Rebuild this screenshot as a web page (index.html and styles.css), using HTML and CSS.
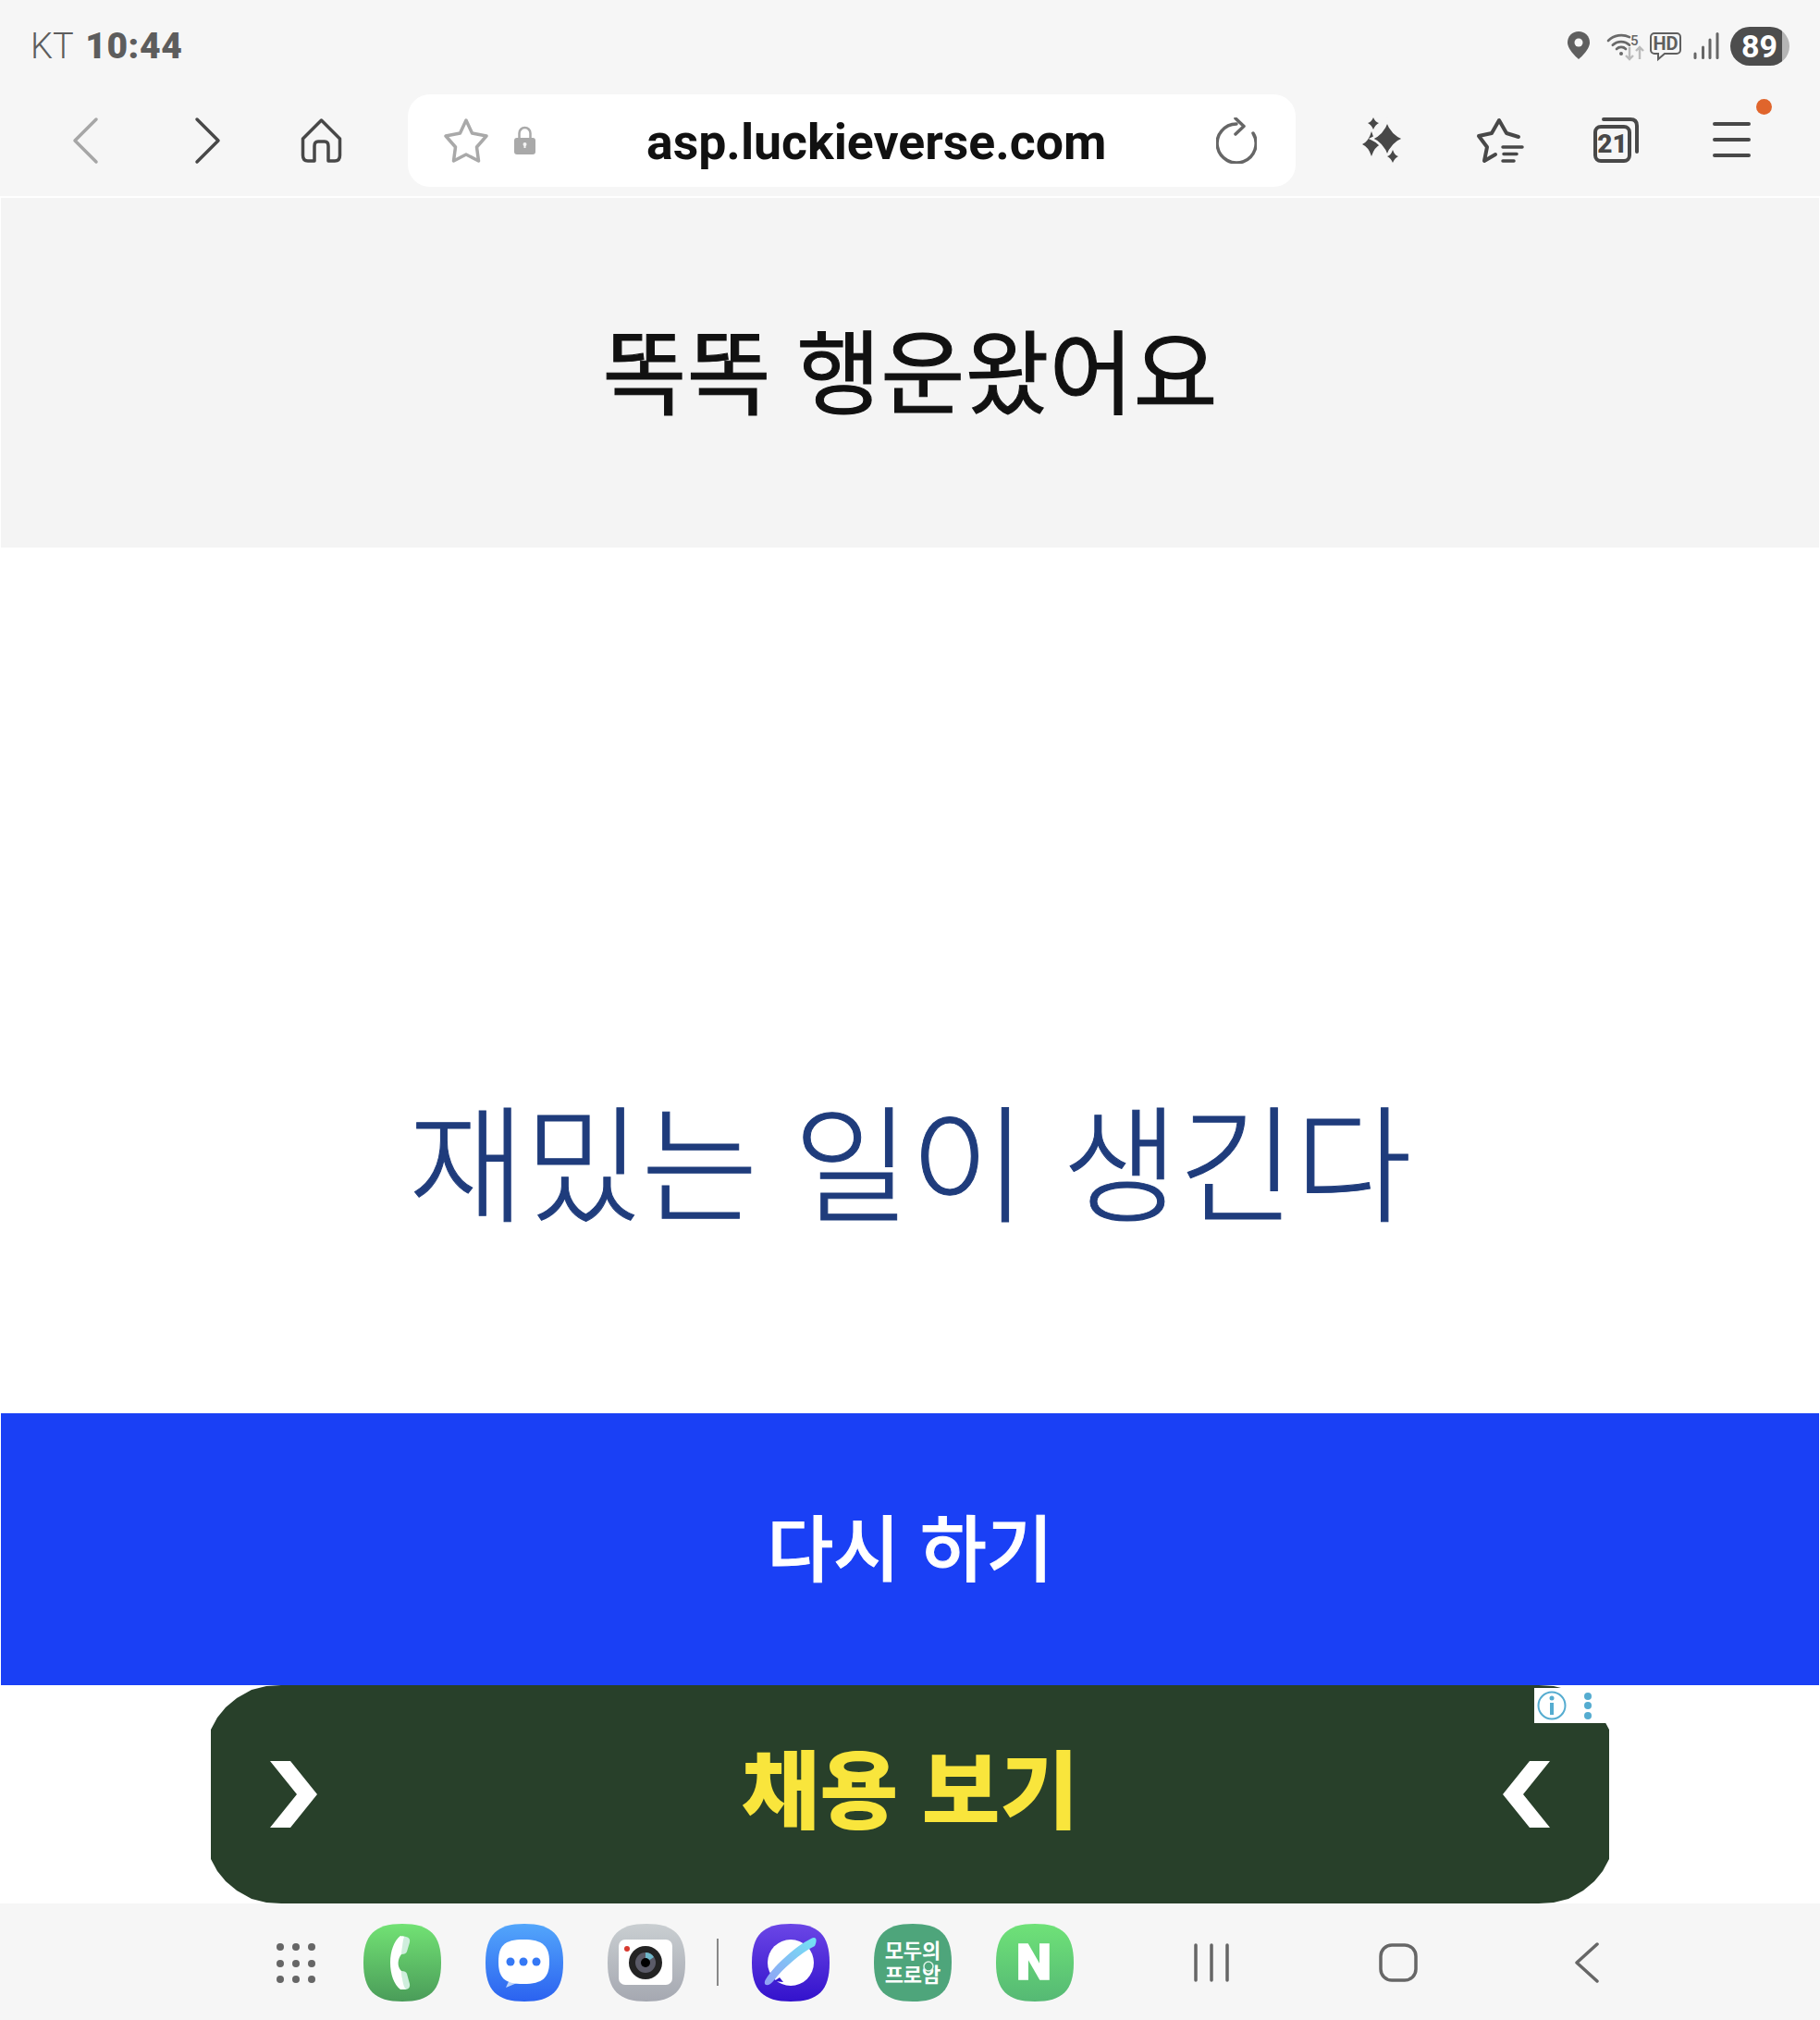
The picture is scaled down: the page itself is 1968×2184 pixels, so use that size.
FILE: index.html
```html
<!DOCTYPE html>
<html lang="ko">
<head>
    <meta charset="UTF-8">
    <meta name="viewport" content="width=device-width, initial-scale=1.0">
    <title>똑똑 행운왔어요</title>
    <link rel="stylesheet" href="styles.css">
</head>
<body>
<!-- Status bar -->
<div class="status-bar">
    <div class="status-left">KT <strong>10:44</strong></div>
    <div class="status-right">
        <svg class="st-pin" width="24" height="30" viewBox="0 0 24 30"><path d="M12 0C5 0 0 5 0 12C0 20 12 30 12 30C12 30 24 20 24 12C24 5 19 0 12 0Z" fill="#5f5f5f"/><circle cx="12" cy="12" r="4.5" fill="#f6f6f6"/></svg>
        <svg class="st-wifi" width="40" height="28" viewBox="0 0 40 28">
            <g fill="none" stroke="#6a6a6a" stroke-width="2.6" stroke-linecap="round">
                <path d="M2 7A20 20 0 0 1 25 3.2"/>
                <path d="M6.8 11.8A13 13 0 0 1 25 11.8"/>
                <path d="M11 16A7 7 0 0 1 21 16"/>
            </g>
            <circle cx="16" cy="21" r="2" fill="#6a6a6a"/>
            <text class="wifi-five" x="26" y="12">5</text>
            <g fill="none" stroke="#bbb" stroke-width="2.4">
                <path d="M25 14V27M21 23L25 27L29 23"/>
                <path d="M36 27V14M32 18L36 14L40 18"/>
            </g>
        </svg>
        <svg class="st-hd" width="34" height="30" viewBox="0 0 34 30">
            <path d="M5 1H29A4 4 0 0 1 33 5V19A4 4 0 0 1 29 23H16L9 29V23H5A4 4 0 0 1 1 19V5A4 4 0 0 1 5 1Z" fill="none" stroke="#5f5f5f" stroke-width="2"/>
            <text class="hd-label" x="17" y="19">HD</text>
        </svg>
        <svg class="st-signal" width="28" height="29" viewBox="0 0 28 29">
            <g stroke="#666" stroke-width="3" stroke-linecap="round">
                <path d="M2 27.500V23"/>
                <path d="M10.500 27.500V16"/>
                <path d="M18 27.500V8"/>
                <path d="M26 27.500V1.500"/>
            </g>
        </svg>
        <span class="battery">89</span>
    </div>
</div>

<!-- Browser toolbar -->
<div class="toolbar">
    <svg class="cell" viewBox="0 0 126 100"><path class="ic-light" d="M75 27L52 50L75 73"/></svg>
    <svg class="cell" viewBox="0 0 126 100"><path class="ic-dark" d="M58 27L81 50L58 73"/></svg>
    <svg class="cell" viewBox="0 0 126 100"><path class="ic-dark" d="M66.500 28L46.500 48V66Q46.500 72 52 72H59V56Q59 51 63 51H70Q74 51 74 56V72H81Q86.500 72 86.500 66V48Z"/></svg>
    <div class="url-box">
        <svg class="url-star" width="50" height="50" viewBox="0 0 50 50"><path d="M25 3L31.500 17L47 20L36.500 32L38.500 47L25 40L11.500 47L13.500 32L3 20L18.500 17Z" fill="none" stroke="#a9a9a9" stroke-width="3.500" stroke-linejoin="round"/></svg>
        <svg class="url-lock" width="23" height="31" viewBox="0 0 23 31"><path d="M5.500 14V8A6 6 0 0 1 17.500 8V14" fill="none" stroke="#a9a9a9" stroke-width="2.500"/><rect y="13" width="23" height="18" rx="3" fill="#a9a9a9"/><path d="M10.500 24H12.500V20H10.500Z" fill="#f4f4f4"/><circle cx="11.500" cy="20" r="2" fill="#f4f4f4"/></svg>
        <span class="url-text">asp.luckieverse.com</span>
        <svg class="url-reload" width="44" height="50" viewBox="0 0 44 50"><path d="M40 17A21 21 0 1 1 22 7M21 1L30 9.500L21 18" fill="none" stroke="#666" stroke-width="3.500" stroke-linecap="round" stroke-linejoin="round"/></svg>
    </div>
    <svg class="cell" viewBox="0 0 126 100">
        <g fill="#484848">
            <path d="M51 40Q54 51 61 54Q54 57 51 67Q48 57 41 54Q48 51 51 40Z"/>
            <path d="M68 29Q73 43 86 48Q73 53 68 67Q63 53 51 48Q63 43 68 29Z" stroke="#f6f6f6" stroke-width="2.500"/>
            <path d="M53 25Q55 30 59 31Q55 33 53 38Q51 33 47 31Q51 30 53 25Z"/>
            <path d="M74 60Q76 66 80 67Q76 69 74 74Q72 69 68 67Q72 66 74 60Z"/>
        </g>
    </svg>
    <svg class="cell" viewBox="0 0 126 100">
        <path class="ic-dark ic-thick" d="M84 46L71 42L63 28L55 42L41 45L50 57L47 72L59 65"/>
        <path class="ic-dark" d="M67 57H88M68 64.500H82M67 72H79"/>
    </svg>
    <svg class="cell" viewBox="0 0 126 100">
        <rect class="ic-dark ic-thick" x="41" y="35" width="37" height="37" rx="6"/>
        <path class="ic-dark ic-thick" d="M50 27H79Q86 27 86 34V62"/>
        <text class="tab-count" x="59.500" y="63">21</text>
    </svg>
    <div class="menu-cell">
        <svg class="cell" viewBox="0 0 126 100"><path class="ic-dark ic-thick" d="M44 32H81M44 49H81M44 66H81"/></svg>
        <span class="menu-dot"></span>
    </div>
</div>

<!-- Page -->
<header class="page-title">
    <h1>똑똑 행운왔어요</h1>
</header>
<main class="result">
    <p>재밌는 일이 생긴다</p>
</main>
<button class="retry">다시 하기</button>

<!-- Ad -->
<div class="ad-slot">
    <div class="ad">
        <svg width="51" height="72" viewBox="0 0 51 72"><polygon points="0,0 22,0 51,36 22,72 0,72 29,36" fill="#fff"/></svg>
        <span class="ad-text">채용 보기</span>
        <svg width="51" height="72" viewBox="0 0 51 72"><polygon points="51,0 29,0 0,36 29,72 51,72 22,36" fill="#fff"/></svg>
    </div>
    <div class="ad-info">
        <svg width="78" height="38" viewBox="0 0 78 38">
            <circle cx="19" cy="19" r="14.500" fill="none" stroke="#55acd0" stroke-width="2"/>
            <circle cx="19" cy="11" r="2.500" fill="#55acd0"/>
            <rect x="17" y="16" width="4" height="13" fill="#55acd0"/>
            <circle cx="58" cy="9" r="4" fill="#55acd0"/>
            <circle cx="58" cy="19" r="4" fill="#55acd0"/>
            <circle cx="58" cy="30" r="4" fill="#55acd0"/>
        </svg>
    </div>
</div>

<!-- Dock -->
<footer class="dock">
    <svg class="dock-grid" width="44" height="44" viewBox="0 0 44 44">
        <g fill="#666">
            <circle cx="4" cy="4" r="4"/><circle cx="21" cy="4" r="4"/><circle cx="38" cy="4" r="4"/>
            <circle cx="4" cy="22" r="4"/><circle cx="21" cy="22" r="4"/><circle cx="38" cy="22" r="4"/>
            <circle cx="4" cy="39" r="4"/><circle cx="21" cy="39" r="4"/><circle cx="38" cy="39" r="4"/>
        </g>
    </svg>
    <svg class="app" width="84" height="84" viewBox="0 0 84 84">
        <defs>
            <linearGradient id="g-phone" x1="0" y1="0" x2="0" y2="1"><stop offset="0" stop-color="#72e274"/><stop offset="1" stop-color="#4a9c59"/></linearGradient>
            <linearGradient id="g-msg" x1="0" y1="0" x2="0" y2="1"><stop offset="0" stop-color="#53a6fb"/><stop offset="1" stop-color="#2b62f0"/></linearGradient>
            <linearGradient id="g-cam" x1="0" y1="0" x2="0" y2="1"><stop offset="0" stop-color="#c9ced1"/><stop offset="1" stop-color="#a5a8b1"/></linearGradient>
            <linearGradient id="g-web" x1="0" y1="0" x2="0" y2="1"><stop offset="0" stop-color="#6b46e6"/><stop offset="1" stop-color="#3312cc"/></linearGradient>
            <linearGradient id="g-ring" x1="1" y1="0" x2="0" y2="1"><stop offset="0" stop-color="#72e4f4"/><stop offset="1" stop-color="#92a0f5"/></linearGradient>
            <linearGradient id="g-n" x1="0" y1="0" x2="0" y2="1"><stop offset="0" stop-color="#6fe278"/><stop offset="1" stop-color="#55b974"/></linearGradient>
        </defs>
        <path d="M42 0C72 0 84 12 84 42C84 72 72 84 42 84C12 84 0 72 0 42C0 12 12 0 42 0Z" fill="url(#g-phone)"/>
        <path d="M42 13L46 14Q51 15 50 20L47 30Q46 33 41 33ZM41 51Q46 51 47 54L50 65Q51 70 46 71L42 71Z" fill="#cfeedd"/>
        <path d="M40 13L44 14C42 20 42 28 41 33C37 38 36 46 41 51C42 58 42 66 46 71L40 71C33 66 29 54 29 42C29 30 33 18 40 13Z" fill="#fff"/>
    </svg>
    <svg class="app" width="84" height="84" viewBox="0 0 84 84">
        <path d="M42 0C72 0 84 12 84 42C84 72 72 84 42 84C12 84 0 72 0 42C0 12 12 0 42 0Z" fill="url(#g-msg)"/>
        <path d="M26 60L22 69L34 64Z" fill="#bcd4fb"/>
        <path d="M41 17C62 17 69 24 69 41C69 58 62 65 41 65C20 65 14 58 14 41C14 24 20 17 41 17Z" fill="#fff"/>
        <g fill="#3578f5"><circle cx="27" cy="41" r="4.500"/><circle cx="41" cy="41" r="4.500"/><circle cx="55" cy="41" r="4.500"/></g>
    </svg>
    <svg class="app app-last" width="84" height="84" viewBox="0 0 84 84">
        <path d="M42 0C72 0 84 12 84 42C84 72 72 84 42 84C12 84 0 72 0 42C0 12 12 0 42 0Z" fill="url(#g-cam)"/>
        <rect x="12" y="17" width="58" height="49" rx="7" fill="#fff"/>
        <circle cx="21" cy="27" r="3" fill="#d8392f"/>
        <circle cx="41" cy="42" r="18" fill="#232323"/>
        <circle cx="41" cy="42" r="11" fill="#5b5b68"/>
        <path d="M41 31A11 11 0 0 1 50 36L41 42Z" fill="#6fb7c9"/>
        <circle cx="41" cy="42" r="5" fill="#000"/>
    </svg>
    <span class="dock-divider"></span>
    <svg class="app" width="84" height="84" viewBox="0 0 84 84">
        <path d="M42 0C72 0 84 12 84 42C84 72 72 84 42 84C12 84 0 72 0 42C0 12 12 0 42 0Z" fill="url(#g-web)"/>
        <circle cx="42" cy="42" r="25" fill="#fff"/>
        <path d="M24 62L30 58L34 63Z" fill="#3312cc"/>
        <path d="M15 60C26 43 48 24 64 16C70 13 71 18 68 24C52 32 34 48 24 61C18 69 11 67 15 60Z" fill="url(#g-ring)"/>
    </svg>
    <svg class="app" width="84" height="84" viewBox="0 0 84 84">
        <path d="M42 0C72 0 84 12 84 42C84 72 72 84 42 84C12 84 0 72 0 42C0 12 12 0 42 0Z" fill="#4ea57b"/>
        <text class="app-label" x="42" y="37">모두의</text>
        <text class="app-label" x="42" y="63">프로암</text>
        <circle cx="59" cy="46" r="5" fill="#4ea57b" stroke="#dff3e8" stroke-width="1.500"/>
    </svg>
    <svg class="app" width="84" height="84" viewBox="0 0 84 84">
        <path d="M42 0C72 0 84 12 84 42C84 72 72 84 42 84C12 84 0 72 0 42C0 12 12 0 42 0Z" fill="url(#g-n)"/>
        <text class="app-n" x="41" y="60">N</text>
    </svg>
    <svg class="nav nav-recent" width="40" height="44" viewBox="0 0 40 44"><path class="nav-line" d="M3 3V41M20 3V41M37 3V41"/></svg>
    <svg class="nav nav-home" width="42" height="44" viewBox="0 0 42 44"><rect class="nav-line" x="2" y="3" width="38" height="38" rx="12"/></svg>
    <svg class="nav nav-back" width="26" height="44" viewBox="0 0 26 44"><path class="nav-line" d="M24 2L2 22L24 42"/></svg>
</footer>
</body>
</html>
```

FILE: styles.css
```css
* {
    box-sizing: border-box;
}
body {
    margin: 0;
    width: 1968px;
    height: 2184px;
    overflow: hidden;
    background: #fff;
    font-family: "Noto Sans CJK KR", "Noto Sans", sans-serif;
}
.status-bar {
    height: 102px;
    background: #f6f6f6;
    display: flex;
    justify-content: space-between;
    padding: 29px 33px 0 33px;
}
.status-left {
    font-family: "Roboto", sans-serif;
    font-size: 38px;
    font-weight: 300;
    line-height: 42px;
    color: #5d5d5d;
}
.status-left strong {
    font-size: 39px;
    font-weight: 900;
    margin-left: 4px;
    letter-spacing: 0.6px;
}
.status-right {
    display: flex;
    align-items: flex-start;
}
.st-pin {
    margin-top: 5px;
}
.st-wifi {
    margin: 8px 0 0 18px;
    overflow: visible;
}
.wifi-five {
    font-family: "Roboto", sans-serif;
    font-size: 15px;
    font-weight: 500;
    fill: #666;
}
.st-hd {
    margin: 6px 0 0 7px;
    overflow: visible;
}
.hd-label {
    font-family: "Roboto", sans-serif;
    font-size: 20px;
    font-weight: 700;
    fill: #5f5f5f;
    text-anchor: middle;
}
.st-signal {
    margin: 6px 0 0 13px;
}
.battery {
    width: 64px;
    height: 42px;
    margin-left: 12px;
    border-radius: 21px;
    background: linear-gradient(90deg, #4d4d4d 88%, #b5b5b5 88%);
    color: #fff;
    font-family: "Roboto", sans-serif;
    font-size: 34px;
    font-weight: 700;
    line-height: 43px;
    text-align: center;
    padding-right: 1px;
}
.toolbar {
    height: 112px;
    padding: 0 0 12px 29px;
    background: #f6f6f6;
    border-bottom: 2px solid #fff;
    display: flex;
    align-items: flex-start;
}
.cell {
    width: 126px;
    height: 100px;
    display: block;
    flex: none;
}
.ic-light, .ic-dark {
    fill: none;
    stroke-width: 3.5;
    stroke-linecap: round;
    stroke-linejoin: round;
}
.ic-light {
    stroke: #a6a6a6;
}
.ic-dark {
    stroke: #484848;
}
.ic-thick {
    stroke-width: 4;
}
.tab-count {
    font-family: "Roboto", sans-serif;
    font-size: 28px;
    font-weight: 900;
    fill: #484848;
    text-anchor: middle;
}
.url-box {
    width: 960px;
    height: 100px;
    margin: 0 31px 0 34px;
    flex: none;
    background: #fff;
    border-radius: 24px;
    display: flex;
    align-items: center;
}
.url-star {
    margin-left: 38px;
}
.url-lock {
    margin: -2px 0 0 27px;
}
.url-text {
    margin: 2px 0 0 120px;
    font-family: "Roboto", sans-serif;
    font-size: 53.6px;
    font-weight: 700;
    color: #111;
}
.url-reload {
    margin-left: auto;
    margin-right: 42px;
}
.menu-cell {
    position: relative;
}
.menu-dot {
    position: absolute;
    left: 89px;
    top: 5px;
    width: 17px;
    height: 17px;
    border-radius: 50%;
    background: #e0652c;
}
.page-title {
    height: 378px;
    margin: 0 1px;
    padding-bottom: 12px;
    background: #f4f4f4;
    display: flex;
    align-items: center;
    justify-content: center;
}
.page-title h1 {
    margin: 0;
    font-size: 99px;
    font-weight: 400;
    line-height: 130px;
    color: #111;
    -webkit-text-stroke: 1px #111;
}
.result {
    height: 936px;
    margin: 0 1px;
    padding-top: 579px;
    text-align: center;
}
.result p {
    margin: 0;
    font-size: 137px;
    font-weight: 300;
    line-height: 160px;
    color: #1f3c7c;
    -webkit-text-stroke: 1px #1f3c7c;
}
.retry {
    display: block;
    width: 1966px;
    height: 294px;
    margin: 0 1px;
    padding: 0 0 10px;
    border: none;
    background: #1a40f5;
    color: #fff;
    font-family: inherit;
    font-size: 78px;
    font-weight: 500;
    -webkit-text-stroke: 1px #fff;
}
.ad-slot {
    position: relative;
    height: 236px;
    padding: 0 228px;
}
/* flat oval corners, clip-path is closer than border-radius here */
.ad {
    height: 236px;
    padding: 0 64px;
    background: #28402a;
    clip-path: polygon(
        0 48px, 7px 35px, 16px 24px, 28px 14px, 44px 5px, 60px 1px, 76px 0,
        calc(100% - 76px) 0, calc(100% - 60px) 1px, calc(100% - 44px) 5px, calc(100% - 28px) 14px, calc(100% - 16px) 24px, calc(100% - 7px) 35px, 100% 48px,
        100% calc(100% - 48px), calc(100% - 7px) calc(100% - 35px), calc(100% - 16px) calc(100% - 24px), calc(100% - 28px) calc(100% - 14px), calc(100% - 44px) calc(100% - 5px), calc(100% - 60px) calc(100% - 1px), calc(100% - 76px) 100%,
        76px 100%, 60px calc(100% - 1px), 44px calc(100% - 5px), 28px calc(100% - 14px), 16px calc(100% - 24px), 7px calc(100% - 35px), 0 calc(100% - 48px)
    );
    display: flex;
    align-items: center;
    justify-content: space-between;
}
.ad-text {
    font-size: 92px;
    font-weight: 900;
    line-height: 100px;
    color: #f9e53c;
    margin-top: -20px;
}
.ad-info {
    position: absolute;
    top: 3px;
    right: 228px;
    width: 81px;
    height: 38px;
    background: #fff;
}
.ad-info svg {
    display: block;
}
.dock {
    height: 126px;
    background: #f6f6f6;
    display: flex;
    align-items: flex-start;
    padding: 22px 0 0 299px;
}
.dock-grid {
    margin: 21px 50px 0 0;
    flex: none;
}
.app {
    flex: none;
    margin-right: 48px;
}
.app-last {
    margin-right: 34px;
}
.dock-divider {
    width: 2px;
    height: 51px;
    margin: 16px 36px 0 0;
    background: #888;
    flex: none;
}
.app-label {
    font-size: 22px;
    font-weight: 700;
    fill: #fff;
    text-anchor: middle;
}
.app-n {
    font-family: "Roboto", sans-serif;
    font-size: 54px;
    font-weight: 900;
    fill: #fff;
    stroke: #fff;
    stroke-width: 1.5;
    text-anchor: middle;
}
.nav {
    flex: none;
    margin-top: 20px;
}
.nav-line {
    fill: none;
    stroke: #666;
    stroke-width: 3.5;
    stroke-linecap: round;
    stroke-linejoin: round;
}
.nav-recent {
    margin-left: 81px;
}
.nav-home {
    margin-left: 161px;
}
.nav-back {
    margin-left: 170px;
}
```
